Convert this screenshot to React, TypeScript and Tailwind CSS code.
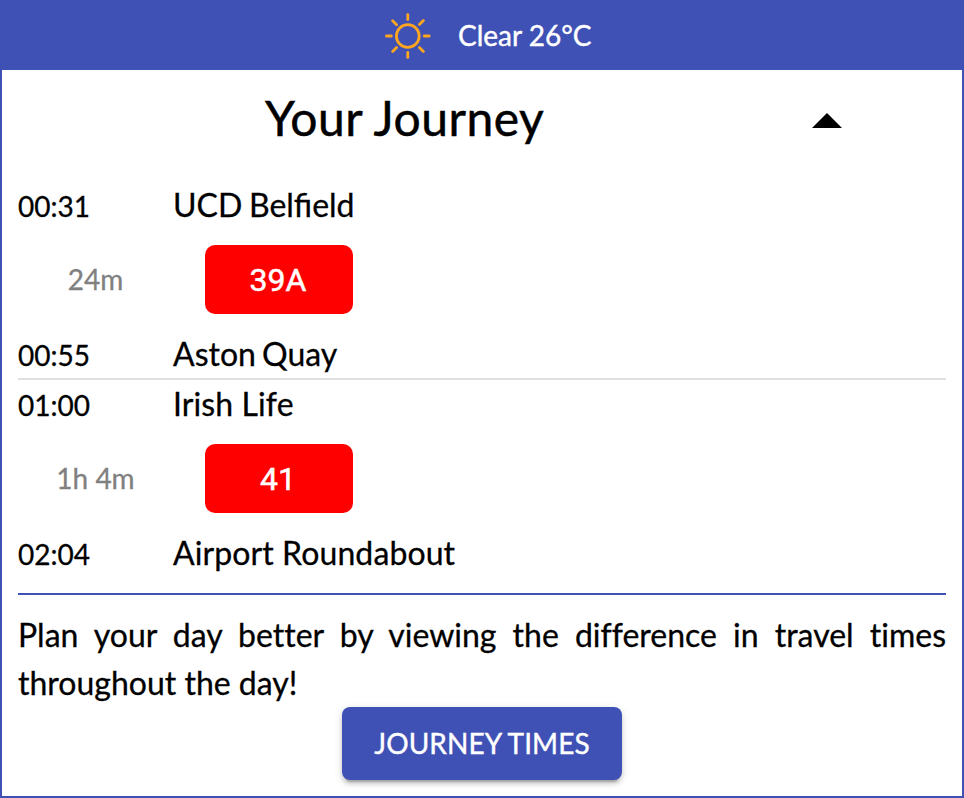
import React from "react";

function Sun() {
  return (
    <svg className="mt-0.5 h-[46px] w-[46px]" viewBox="0.2 0 46 46" fill="none" stroke="#ffa51f" strokeWidth="2.8" strokeLinecap="round">
      <circle cx="23" cy="23" r="11.4" />
      <path d="M23 1.6v5M23 39.4v5M1.6 23h5M39.4 23h5M7.8 7.8l4 4M34.6 34.6l4 4M7.8 38.6l4-4M34.6 11.4l4-4" />
    </svg>
  );
}

function Stop({ time, name, spacing = "" }: { time: string; name: string; spacing?: string }) {
  return (
    <div className="flex h-[50px] items-center leading-none">
      <span className="w-[155px] text-[28px]">{time}</span>
      <span className={`-mt-0.5 text-[32px] ${spacing}`}>{name}</span>
    </div>
  );
}

function Leg({ duration, route }: { duration: string; route: string }) {
  return (
    <div className="flex h-[99px] items-center pb-0.5">
      <span className="w-[155px] pb-0.5 text-center text-[28px] text-[#808080]">{duration}</span>
      <span className="ml-8 flex h-[69px] w-[148px] items-center justify-center rounded-[10px] bg-[#ff0000] pr-0.5 font-['Roboto',Arial,sans-serif] text-[32px] text-white [-webkit-text-stroke:0.5px_white]">{route}</span>
    </div>
  );
}

export default function App() {
  return (
    <div className="h-[798px] w-[964px] border-2 border-t-0 border-[#3f51b5] bg-white font-['Lato',sans-serif] text-black [-webkit-text-stroke:0.3px_currentColor]">
      <header className="flex h-[70px] items-center bg-[#3f51b5] pl-[383px] text-[28px] text-white">
        <Sun />
        <span className="ml-[27px] [-webkit-text-stroke:0.4px_white]">Clear 26°C</span>
      </header>
      <div className="flex h-[111px] items-center pl-[263px]">
        <h1 className="w-[547px] pb-4 text-[48px] leading-none tracking-[0.5px] [-webkit-text-stroke:0.5px_black]">Your Journey</h1>
        <div className="mb-[11px] h-0 w-0 border-x-[15px] border-b-[15px] border-x-transparent border-b-black" />
      </div>
      <main className="px-4">
        <Stop time="00:31" name="UCD Belfield" spacing="[word-spacing:-1.5px]" />
        <Leg duration="24m" route="39A" />
        <Stop time="00:55" name="Aston Quay" spacing="[word-spacing:-2px]" />
        <div className="-mt-[2px] h-[2px] bg-[#e0e0e0]" />
        <Stop time="01:00" name="Irish Life" spacing="tracking-[0.1px]" />
        <Leg duration="1h 4m" route="41" />
        <Stop time="02:04" name="Airport Roundabout" spacing="tracking-[0.1px]" />
        <div className="mt-[14px] h-[2px] bg-[#3f51b5]" />
        <p className="mt-[16px] text-justify text-[32px] leading-[48px] [font-variant-ligatures:none]">Plan your day better by viewing the difference in travel times throughout the day!</p>
        <button className="mx-auto block h-[73px] w-[280px] rounded-[8px] bg-[#3f51b5] pb-0.5 text-[28px] tracking-[0.08px] text-white shadow-[0_6px_2px_-4px_rgba(0,0,0,.2),0_4px_4px_rgba(0,0,0,.14),0_2px_10px_rgba(0,0,0,.12)] [-webkit-text-stroke:0.4px_white]">JOURNEY TIMES</button>
      </main>
    </div>
  );
}
